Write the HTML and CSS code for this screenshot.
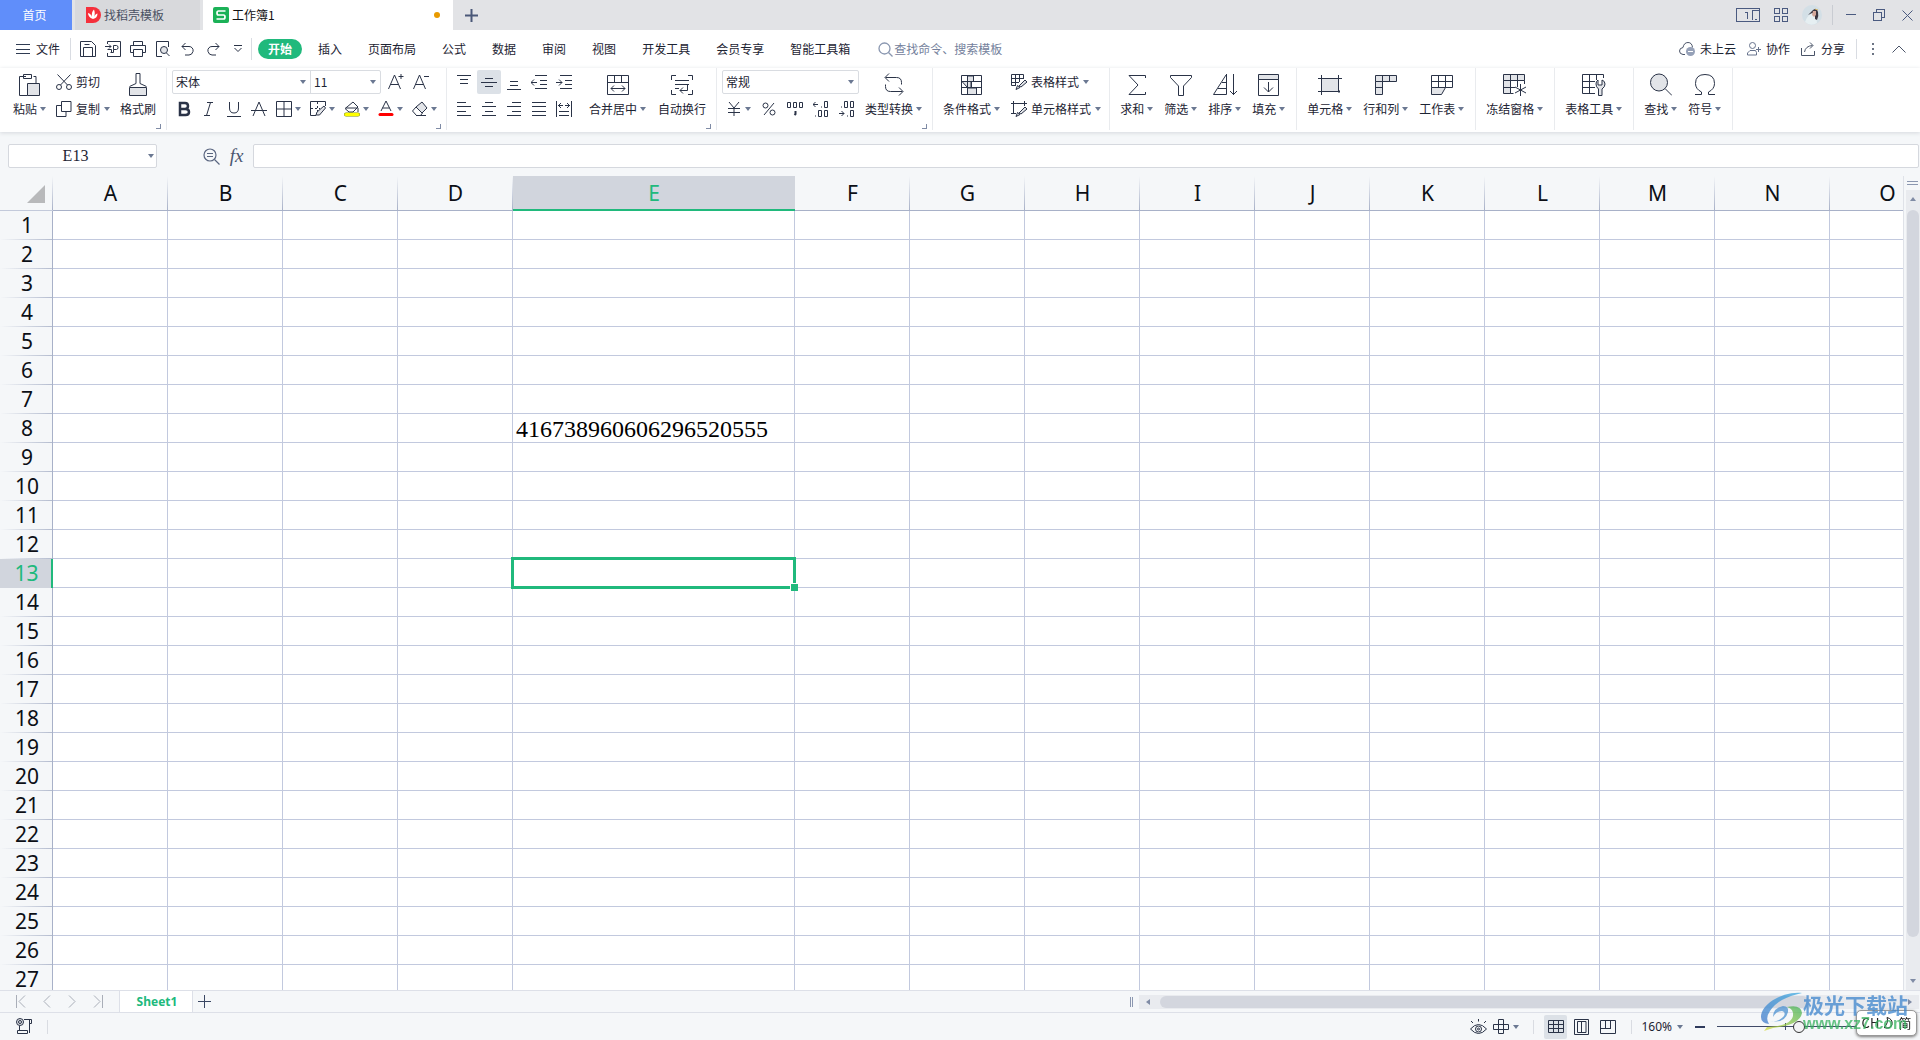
FILE: index.html
```html
<!DOCTYPE html>
<html lang="zh-CN">
<head>
<meta charset="utf-8">
<title>工作簿1</title>
<link rel="stylesheet" href="styles.css">
</head>
<body>
<header class="titlebar">
  <button class="tab tab-home">首页</button>
  <button class="tab tab-doc">
    <svg width="16" height="16" viewBox="0 0 16 16"><path d="M1 0h7a8 8 0 0 1 0 16H1z" fill="#f5303c"/><path d="M8 12C4.500 11 3 8.500 3 6c2 .5 3.500 2 4 4C6.500 7 7 4 9 2.500c1 2.500 1 5 0 7.500 .5-1.500 1.500-3 3.500-3.500C12.500 9.500 11 11.500 8 12z" fill="#fff"/></svg>
    <span>找稻壳模板</span>
  </button>
  <button class="tab tab-active">
    <svg width="16" height="16" viewBox="0 0 16 16"><rect width="16" height="16" rx="2" fill="#1bb157"/><path d="M12.500 4H5.500Q4 4 4 6t1.500 2h5Q12 8 12 10t-1.500 2H3.500" fill="none" stroke="#fff" stroke-width="1.700"/></svg>
    <span>工作簿1</span>
    <i class="unsaved"></i>
  </button>
  <button class="icon-btn tab-new" aria-label="新建"><svg width="13" height="13"><path d="M6.500 0v13M0 6.500h13" stroke="#4a5878" stroke-width="2"/></svg></button>
  <div class="window-tools">
    <button class="icon-btn app" aria-label="窗口"><svg width="24" height="16" fill="none" stroke="#4a5a80" shape-rendering="crispEdges"><path d="M.5 1.500h23v13H.5z"/><path d="M23 3.500h-6.500v9.500M19 12.500h2"/><path d="M9 5.500h2v6"/></svg></button>
    <button class="icon-btn app" aria-label="应用"><svg width="14" height="14" fill="none" stroke="#4a5a80" shape-rendering="crispEdges"><path d="M.5.500h5v5h-5zM8.500.500h5v5h-5zM.5 8.500h5v5h-5zM8.500 8.500h5v5h-5z"/></svg></button>
    <button class="icon-btn" aria-label="账户"><svg width="20" height="20" viewBox="0 0 20 20"><circle cx="10" cy="10" r="10" fill="#d3dfe6"/><path d="M3 17q2-6 6-8l5 1 1 8q-6 4-12-1z" fill="#e6eff2"/><path d="M11 5q4-3 5 2 1 4-1 8l-2-1 0-5-3-1-4 2z" fill="#3b3640"/><path d="M11 6h3v4l-2 2-2-2z" fill="#d4a79a"/><path d="M13 4l3 1" stroke="#d6b86a"/></svg></button>
    <i class="bar-sep"></i>
    <button class="icon-btn win" aria-label="最小化"><svg width="10" height="10"><path d="M0 4.500h10" stroke="#4a5a80" stroke-width="1"/></svg></button>
    <button class="icon-btn win" aria-label="还原"><svg width="12" height="12" fill="none" stroke="#4a5a80" shape-rendering="crispEdges"><path d="M.5 3.500h8v8h-8zM3.500 3.500v-3h8v8h-3"/></svg></button>
    <button class="icon-btn win" aria-label="关闭"><svg width="11" height="11"><path d="M.5.500l10 10M10.500.500l-10 10" stroke="#4a5a80"/></svg></button>
  </div>
</header>

<nav class="menubar">
  <button class="file-btn"><svg width="14" height="10" stroke="#2f3b52" shape-rendering="crispEdges"><path d="M0 .5h14M0 5.500h14M0 9.500h14"/></svg><span>文件</span></button>
  <i class="bar-sep"></i>
  <div class="quick">
    <button class="icon-btn" aria-label="保存"><svg class="ic" width="16" height="16"><path d="M.5.500h11l4 4v11H.5zM3.500 15V6.500h9V15M4.500 3.500h5"/></svg></button>
    <button class="icon-btn" aria-label="输出为PDF"><svg class="ic" width="16" height="16"><path d="M2.500 3V.5h13v15h-13V12M0 5.500h6M4 3.500l2 2-2 2M6.500 12V8.500h-4M8.500 4.500h3q1.500 0 1.500 2t-1.500 2H8.500zM8.500 8.500V11.500h-3"/></svg></button>
    <button class="icon-btn" aria-label="打印"><svg class="ic" width="16" height="16"><path d="M3.500 4V.5h9V4M3.500 11.500h-3v-7h15v7h-3M3.500 8.500h9v7h-9z"/></svg></button>
    <button class="icon-btn" aria-label="打印预览"><svg class="ic" width="16" height="16"><path d="M7 15.500H1.500V.5h12V6"/><circle cx="9" cy="9" r="3.500" class="shade"/><path d="M11.500 12l3 3"/></svg></button>
    <button class="icon-btn" aria-label="撤销"><svg class="ic" width="16" height="16"><path d="M5.500 2L2 5.500 5.500 9M2 5.500h7a4 4 0 0 1 4 5q-1 3.500-4 3.500H5"/></svg></button>
    <button class="icon-btn" aria-label="恢复"><svg class="ic" width="16" height="16"><path d="M10.500 2L14 5.500 10.500 9M14 5.500H7a4 4 0 0 0-4 5q1 3.500 4 3.500h4"/></svg></button>
    <button class="icon-btn more" aria-label="更多"><svg class="ic" width="8" height="8"><path d="M0 .5h8M.5 3l3.500 3.500L7.500 3"/></svg></button>
  </div>
  <i class="bar-sep"></i>
  <div class="tabs">
    <button class="menu on">开始</button><button class="menu">插入</button><button class="menu">页面布局</button><button class="menu">公式</button><button class="menu">数据</button><button class="menu">审阅</button><button class="menu">视图</button><button class="menu">开发工具</button><button class="menu">会员专享</button><button class="menu">智能工具箱</button>
  </div>
  <label class="search"><svg width="15" height="15" fill="none" stroke="#8a97b0" stroke-width="1.300"><circle cx="6.500" cy="6.500" r="5.500"/><path d="M10.500 10.500l4 4"/></svg><input type="text" placeholder="查找命令、搜索模板" aria-label="查找命令、搜索模板"></label>
  <div class="account">
    <button class="acc"><svg width="16" height="14" fill="none" stroke="#4a5468"><path d="M6 12.500H4Q.5 12 .5 9T4 5.500Q5 .5 9 .5t4.500 5"/><circle cx="11.500" cy="9.500" r="4.500" fill="#96a1b8" stroke="none"/><path d="M9 9.500h5" stroke="#fff"/></svg><span>未上云</span></button>
    <button class="acc"><svg width="14" height="14" fill="none" stroke="#66728c"><circle cx="5.500" cy="3.500" r="3"/><path d="M3 8.500h5.500l1 2v2.500H.5v-2zM9 7.500h5M11.500 5v5"/></svg><span>协作</span></button>
    <button class="acc"><svg width="15" height="14" fill="none" stroke="#4a5468"><path d="M.5 6v7.500h13V9M3.500 10q1-6 8-6.500M9 .5l3 3-3 3"/></svg><span>分享</span></button>
    <i class="bar-sep"></i>
    <button class="icon-btn" aria-label="更多选项"><svg width="2" height="12" fill="#6c7484"><path d="M0 0h2v2H0zM0 5h2v2H0zM0 10h2v2H0z"/></svg></button>
    <button class="icon-btn" aria-label="收起功能区"><svg width="14" height="8" fill="none" stroke="#4a5468"><path d="M.5 7.500L7 1l6.500 6.500"/></svg></button>
  </div>
</nav>

<section class="ribbon">
  <div class="group first">
    <button class="big"><svg class="ic" width="22" height="24"><path d="M7 3.500H.5v19h8M14.500 3.500H17V10M4.500 1.500h8v4h-8z"/><path class="shade" d="M8.500 10.500h12v12h-12z"/></svg><span>粘贴<i class="caret"></i></span></button>
    <div class="rows">
      <div class="row"><button class="small"><svg class="ic" width="16" height="16"><circle cx="3" cy="13" r="2.500"/><circle cx="13" cy="13" r="2.500"/><path d="M1.500.500l10 10.500M14.500.500l-10 10.500"/></svg><span>剪切</span></button></div>
      <div class="row"><button class="small"><svg class="ic" width="16" height="16"><path d="M5.500.500h9.500v10H5.500zM5 4.500H.5v11h9.500V11"/></svg><span>复制</span><i class="caret"></i></button></div>
    </div>
    <button class="big"><svg class="ic" width="18" height="24"><path d="M.5 13.500l6.500-3V.5h4V10.500l6.500 3"/><path class="shade" d="M.5 14.500h17v8H.5z"/></svg><span>格式刷</span></button>
    <button class="launcher" aria-label="剪贴板设置"></button>
  </div>

  <div class="group font">
    <div class="rows">
      <div class="row">
        <div class="combos">
          <div class="combo font-name"><select aria-label="字体"><option>宋体</option></select><i class="caret"></i></div>
          <div class="combo font-size"><select aria-label="字号"><option>11</option></select><i class="caret"></i></div>
        </div>
        <button class="tool grow" aria-label="增大字号"><svg class="ic" width="16" height="16"><path d="M.5 15L6.500 1l6 14M2.500 10.500h8M13 0v5M10.500 2.500h5"/></svg></button>
        <button class="tool" aria-label="减小字号"><svg class="ic" width="16" height="16"><path d="M.5 15L6.500 1l6 14M2.500 10.500h8M11 2.500h5"/></svg></button>
      </div>
      <div class="row">
        <button class="tool" aria-label="加粗"><svg class="ic" width="16" height="16"><path stroke-width="2.500" d="M4 2h5q3 0 3 3t-3 3H4zM4 8h5.500q3.500 0 3.500 3t-3.500 3H4z"/></svg></button>
        <button class="tool" aria-label="倾斜"><svg class="ic" width="16" height="16"><path d="M6 1.500h6M3 14.500h6M9.500 1.500l-4 13"/></svg></button>
        <button class="tool" aria-label="下划线"><svg class="ic" width="16" height="16"><path d="M3.500 1v6q0 5 4.500 5t4.500-5V1M1 15.500h14"/></svg></button>
        <button class="tool" aria-label="删除线"><svg class="ic" width="16" height="16"><path d="M2 15L8 1l6 14M0 9.500h16"/></svg></button>
        <button class="split" aria-label="边框"><svg class="ic" width="16" height="16"><path d="M.5.500h15v15H.5zM8 0v16M0 8h16"/></svg><i class="caret"></i></button>
        <button class="split" aria-label="绘图边框"><svg class="ic" width="16" height="16"><path d="M15.500 5V.5H.5v14H6"/><path stroke-dasharray="2 2" d="M7.500 1v9M1 7.500h9"/><path class="shade" d="M6 14l1-3 7-6 1.500 2-6 7z"/></svg><i class="caret"></i></button>
        <button class="split" aria-label="填充颜色"><svg class="ic" width="16" height="16"><path d="M3 6l6-5 5 5-5 5H5L1 7.500zM2 7h11M14 7v4"/><path d="M2 13.500h12" stroke="#7c8c00" stroke-width="4" stroke-linecap="round"/><path d="M2 13.500h12" stroke="#ff0" stroke-width="3" stroke-linecap="round"/></svg><i class="caret"></i></button>
        <button class="split" aria-label="字体颜色"><svg class="ic" width="16" height="16"><path d="M3 10L8 0l5 10M4.500 7h7"/><path d="M2 13.500h12" stroke="red" stroke-width="3" stroke-linecap="round"/></svg><i class="caret"></i></button>
        <button class="split" aria-label="清除"><svg class="ic" width="16" height="16"><path class="shade" d="M4 6l6-5 5 6-5 5z"/><path d="M4 6l-3.500 4 4 4.500h4l2-2.500M4 14.500h10"/></svg><i class="caret"></i></button>
      </div>
    </div>
    <button class="launcher" aria-label="字体设置"></button>
  </div>

  <div class="group tight">
    <div class="rows">
      <div class="row">
        <button class="tool" aria-label="顶端对齐"><svg class="ic" width="16" height="16"><path d="M1 1.500h14M4 5.500h8M4 9.500h8"/></svg></button>
        <button class="tool on" aria-label="垂直居中"><svg class="ic" width="16" height="16"><path d="M4 4.500h8M0 8.500h16M4 12.500h8"/></svg></button>
        <button class="tool" aria-label="底端对齐"><svg class="ic" width="16" height="16"><path d="M4 7.500h8M4 11.500h8M1 15.500h14"/></svg></button>
        <button class="tool" aria-label="减少缩进"><svg class="ic" width="16" height="16"><path d="M4 1.500h12M9 6.500h7M9 10.500h7M4 14.500h12M0 8.500h6M3 5.500l-3 3 3 3"/></svg></button>
        <button class="tool" aria-label="增加缩进"><svg class="ic" width="16" height="16"><path d="M4 1.500h12M9 6.500h7M9 10.500h7M4 14.500h12M0 8.500h6M3 5.500l3 3-3 3"/></svg></button>
      </div>
      <div class="row">
        <button class="tool" aria-label="左对齐"><svg class="ic" width="16" height="16"><path d="M1 1.500h9M1 5.500h14M1 10.500h9M1 14.500h14"/></svg></button>
        <button class="tool" aria-label="水平居中"><svg class="ic" width="16" height="16"><path d="M4 1.500h8M1 5.500h14M4 10.500h8M1 14.500h14"/></svg></button>
        <button class="tool" aria-label="右对齐"><svg class="ic" width="16" height="16"><path d="M6 1.500h9M1 5.500h14M6 10.500h9M1 14.500h14"/></svg></button>
        <button class="tool" aria-label="两端对齐"><svg class="ic" width="16" height="16"><path d="M1 1.500h14M1 5.500h14M1 10.500h14M1 14.500h14"/></svg></button>
        <button class="tool" aria-label="分散对齐"><svg class="ic" width="16" height="16"><path d="M.5 0v16M15.500 0v16M2 4.500h5M9 4.500h5M5 2L2.500 4.500 5 7M11 2l2.500 2.500L11 7M3 10.500h10M3 14.500h10"/></svg></button>
      </div>
    </div>
    <button class="big wide"><svg class="ic" width="22" height="24"><path d="M.5 2.500h21v19H.5zM0 9.500h22M7.500 3v6M14.500 3v6M4 15.500h14M7 12.500l-3 3 3 3M15 12.500l3 3-3 3"/></svg><span>合并居中<i class="caret"></i></span></button>
    <button class="big"><svg class="ic" width="22" height="24"><path d="M5 2.500H.5V7M17 2.500h4.500V7M5 21.500H.5V17M17 21.500h4.500V17M4 7.500h14M4 11.500h14M4 15.500h4M16.500 12v5.500H9M12 14.500l-3 3 3 3"/></svg><span>自动换行</span></button>
    <button class="launcher" aria-label="对齐设置"></button>
  </div>

  <div class="group tight">
    <div class="rows">
      <div class="row"><div class="combos"><div class="combo format"><select aria-label="数字格式"><option>常规</option></select><i class="caret"></i></div></div></div>
      <div class="row spread">
        <button class="split" aria-label="货币"><svg class="ic" width="16" height="16"><path d="M3 1l5 6 5-6M8 7v8M2 7.500h12M2 11.500h12"/></svg><i class="caret"></i></button>
        <button class="tool" aria-label="百分比"><svg class="ic" width="16" height="16"><circle cx="4.500" cy="4.500" r="2.500"/><circle cx="11.500" cy="11.500" r="2.500"/><path d="M13 2L3 14"/></svg></button>
        <button class="tool" aria-label="千位分隔"><svg class="ic" width="16" height="16"><path d="M.5 1.500h3v5h-3zM6.500 1.500h3v5h-3zM12.500 1.500h3v5h-3z"/><path d="M8.500 10v3l-1 1" stroke-width="2"/></svg></button>
        <button class="tool" aria-label="增加小数位"><svg class="ic" width="16" height="16"><path d="M0 3.500h5M2.500 1L0 3.500 2.500 6M8 6h1M11.500.500h3v6h-3zM2 15h1M5.500 9.500h3v6h-3zM11.500 9.500h3v6h-3z"/></svg></button>
        <button class="tool" aria-label="减少小数位"><svg class="ic" width="16" height="16"><path d="M2 6h1M5.500.500h3v6h-3zM11.500.500h3v6h-3zM0 12.500h5M2.500 10L5 12.500 2.500 15M8 15h1M11.500 9.500h3v6h-3z"/></svg></button>
      </div>
    </div>
    <button class="big near"><svg class="ic" width="20" height="24"><path d="M5 .5L1 4.500l4 4M1.500 4.500h11q5 0 5 5v2M15 14.500l4 4-4 4M18.500 18.500h-12q-5 0-5-5v-2"/></svg><span>类型转换<i class="caret"></i></span></button>
    <button class="launcher" aria-label="数字设置"></button>
  </div>

  <div class="group snug">
    <button class="big"><svg class="ic" width="22" height="24"><path class="shade" d="M6.500 3v5.500h6V3zM6.500 15v6.500h9V15zM1 8.500h9v6H6.500z"/><path d="M.5 2.500h20v19H.5zM0 8.500h21M0 14.500h21M6.500 3v19M12.500 3v6M10.500 9v6M15.500 15v7"/></svg><span>条件格式<i class="caret"></i></span></button>
    <div class="rows">
      <div class="row"><button class="small"><svg class="ic" width="16" height="16"><path d="M12.500 4V.5H.5v11H5M0 4.500h13M0 8.500h8M4.500 0v11M8.500 0v8"/><path class="shade" d="M5 15.500l1.500-4 2.500 2zM8 12l6-6 2 2-6 5z"/></svg><span>表格样式</span><i class="caret"></i></button></div>
      <div class="row"><button class="small"><svg class="ic" width="16" height="16"><path d="M0 2.500h16M2.500 0v13M13.500 0v5M0 12.500h5"/><path class="shade" d="M5 15.500l1.500-4 2.500 2zM8 12l6-6 2 2-6 5z"/></svg><span>单元格样式</span><i class="caret"></i></button></div>
    </div>
  </div>

  <div class="group">
    <button class="big"><svg class="ic" width="18" height="24"><path d="M17.500 5V2.500H1l9 9.500-9 9.500h16.500V19"/></svg><span>求和<i class="caret"></i></span></button>
    <button class="big"><svg class="ic" width="22" height="24"><path d="M.5 2.500h21v2l-8 8.500v9.500h-5V13l-8-8.500z"/></svg><span>筛选<i class="caret"></i></span></button>
    <button class="big"><svg class="ic" width="24" height="24"><path d="M13.500 1v20.500H.5L13 2M9 9.500h4.500M5 15.500h8.500M20.500 1v21M17 18l3.500 3.500L24 18"/></svg><span>排序<i class="caret"></i></span></button>
    <button class="big"><svg class="ic" width="22" height="24"><path class="shade" d="M.5 1.500h20v5H.5z"/><path d="M.5 6.500h20v16H.5zM10.500 9v10M6 14.500l4.500 4.500 4.500-4.500"/></svg><span>填充<i class="caret"></i></span></button>
  </div>

  <div class="group">
    <button class="big"><svg class="ic" width="24" height="24"><path class="shade" d="M3.500 5.500h17v13h-17z"/><path d="M0 5.500h24M3.500 2v20M20.500 2v14M0 18.500h18"/><path d="M20 18.500h2" stroke-width="2"/></svg><span>单元格<i class="caret"></i></span></button>
    <button class="big"><svg class="ic" width="22" height="24"><path class="shade" d="M.5 2.500h21v6h-21zM.5 8.500h7v13h-7z"/><path d="M.5 14.500h7M7.500 3v6M14.500 3v6"/></svg><span>行和列<i class="caret"></i></span></button>
    <button class="big"><svg class="ic" width="22" height="24"><path d="M.5 2.500h21v12H.5zM0 8.500h22M7.500 3v12M14.500 3v12"/><path class="shade" d="M.5 14.500h14l-4 7H.5z"/></svg><span>工作表<i class="caret"></i></span></button>
  </div>

  <div class="group">
    <button class="big"><svg class="ic" width="24" height="24"><path class="shade" d="M.5 1.500h21v6h-21zM.5 7.500h7v13h-7z"/><path d="M21.500 7.500V11M7.500 20.500h3M.5 14.500H12M7.500 2v6M14.500 2v12M17.500 11v12M12 14l11 6M12 20l11-6"/></svg><span>冻结窗格<i class="caret"></i></span></button>
  </div>
  <div class="group">
    <button class="big"><svg class="ic" width="24" height="24"><path d="M21.500 5V1.500H.5v19H13M0 8.500h13M0 14.500h13M7.500 2v19M14.500 2v5"/><path class="shade" d="M16.500 22.500V16Q14 14 14 11t2-4v5h4V7q3 1 3 4t-3 5v6.500z"/></svg><span>表格工具<i class="caret"></i></span></button>
  </div>
  <div class="group">
    <button class="big"><svg class="ic" width="22" height="24"><circle class="shade" cx="9" cy="9.500" r="8.500"/><path d="M15 15.500l7 7"/></svg><span>查找<i class="caret"></i></span></button>
    <button class="big"><svg class="ic" width="20" height="24"><path d="M0 21.500h6.500V19Q.5 16 .5 10.500.5 1.500 10 1.500t9.500 9q0 5.500-6 8.500v2.500H20"/></svg><span>符号<i class="caret"></i></span></button>
  </div>
</section>

<section class="formula-bar">
  <div class="namebox"><input type="text" value="E13" aria-label="名称框"><i class="caret"></i></div>
  <button class="icon-btn" aria-label="查找公式"><svg width="17" height="17" fill="none" stroke="#5a6680" stroke-width="1.200"><circle cx="7" cy="7" r="6"/><path d="M11.500 11.500l5 5M4 5.500h6M4 8.500h6"/></svg></button>
  <button class="fx" aria-label="插入函数">fx</button>
  <input class="formula" type="text" aria-label="编辑栏">
</section>

<main class="sheet">
  <div class="grid-view"><table class="grid" id="grid"></table></div>
  <div class="vscroll">
    <i class="v-split"></i>
    <div class="v-track"><i class="arrow up"></i><i class="v-thumb"></i><i class="arrow down"></i></div>
  </div>
</main>

<section class="sheetbar">
  <div class="sheet-nav">
    <button class="icon-btn" aria-label="第一张"><svg width="10" height="13"><path d="M.5 0v13M9 .5l-6 6 6 6"/></svg></button>
    <button class="icon-btn" aria-label="上一张"><svg width="8" height="13"><path d="M7 .5l-6 6 6 6"/></svg></button>
    <button class="icon-btn" aria-label="下一张"><svg width="8" height="13"><path d="M1 .5l6 6-6 6"/></svg></button>
    <button class="icon-btn" aria-label="最后一张"><svg width="10" height="13"><path d="M9.500 0v13M1 .5l6 6-6 6"/></svg></button>
  </div>
  <button class="sheet-tab">Sheet1</button>
  <button class="icon-btn add-sheet" aria-label="新建工作表"><svg width="13" height="13"><path d="M6.500 0v13M0 6.500h13" stroke="#3a4763" stroke-width="1"/></svg></button>
  <div class="hscroll"><i class="grip"></i><div class="h-track"><i class="arrow left"></i><i class="h-thumb"></i><i class="arrow right"></i></div></div>
</section>

<footer class="status">
  <button class="icon-btn" aria-label="宏录制"><svg class="ic" width="17" height="17"><circle class="shade" cx="4" cy="4" r="3.500"/><circle cx="4" cy="4" r="1.500"/><path d="M8 1.500h7.500v4h-2M13.500 2v13M1.500 12.500h10v3h-10zM3.500 8v4"/></svg></button>
  <i class="bar-sep"></i>
  <div class="view-tools">
    <button class="icon-btn" aria-label="护眼模式"><svg class="ic" width="17" height="16"><path d="M.5 10q8-9 16 0-8 9-16 0zM8.500 0v2.500M1 2l2 2M16 2l-2 2"/><circle cx="8.500" cy="10" r="3"/><circle cx="8.500" cy="10" r="1"/></svg></button>
    <button class="icon-btn reading" aria-label="阅读模式"><svg class="ic" width="16" height="15"><path d="M5.500.500h5v14h-5zM.5 5.500h15v5H.5z"/></svg><i class="caret"></i></button>
    <i class="bar-sep"></i>
    <button class="icon-btn view on" aria-label="普通视图"><svg class="ic" width="16" height="14"><path d="M.5.500h15v12H.5zM0 4.500h16M0 8.500h16M5.500 0v13M10.500 0v13"/></svg></button>
    <button class="icon-btn view" aria-label="页面布局"><svg class="ic" width="16" height="16"><path d="M.5.500h14v15H.5zM3.500 2.500h8.500v11H3.500zM7.500 2.500v11"/></svg></button>
    <button class="icon-btn view" aria-label="分页预览"><svg class="ic" width="16" height="14"><path d="M.5.500h15v13H.5zM5.500 0v8M10.500 0v8M0 8.500h11"/></svg></button>
    <i class="bar-sep near-sep"></i>
    <button class="zoom-val">160%<i class="caret"></i></button>
    <button class="icon-btn minus" aria-label="缩小"><svg width="10" height="2"><path d="M0 1h10" stroke="#2f3b5c" stroke-width="2"/></svg></button>
    <input class="zoom-range" type="range" min="0" max="100" value="47" aria-label="显示比例">
  </div>
</footer>

<div class="ime"><span>CH</span><svg width="9" height="12" fill="none" stroke="#222"><path d="M3 .5q2 5-3 10 6 2 8-3Q9 2 3 .5z"/></svg><span>简</span></div>
<div class="watermark">
  <svg width="42" height="40" viewBox="0 0 42 40">
    <defs><linearGradient id="wb" x1="0" y1="1" x2="1" y2="0"><stop offset="0" stop-color="#3f78c8"/><stop offset="1" stop-color="#3aa9e0"/></linearGradient><linearGradient id="wg" x1="0" y1="1" x2="1" y2="0"><stop offset="0" stop-color="#d8dc3c"/><stop offset="1" stop-color="#3cae58"/></linearGradient></defs>
    <path d="M41 1C22-1 0 12 0 25q0 6 8 7-4-6 1-13Q17 6 41 1z" fill="url(#wb)"/>
    <path d="M9 29q8 2 14-5 2-4-2-5-6 0-9 6 0-9 10-11 6 0 5 6-3 12-18 9z" fill="#4a90d0"/>
    <path d="M26 15q14-3 15 6Q39 33 12 36l-9 3 3-4q24-1 26-11 1-7-6-9z" fill="url(#wg)"/>
  </svg>
  <div><b>极光下载站</b><span>www.xz7.com</span></div>
</div>
<script src="grid.js"></script>
</body>
</html>
```
FILE: grid.js
```js
const columns = 'ABCDEFGHIJKLMNO'.split('');
const rowCount = 27;
const cells = { E8: '416738960606296520555' };
const active = { col: 'E', row: 13 };

const grid = document.getElementById('grid');
let html = '<colgroup><col class="c-head">';
columns.forEach(c => { html += `<col class="${c === 'E' ? 'c-wide' : 'c-std'}">`; });
html += '</colgroup><thead><tr><td class="corner"></td>';
columns.forEach(c => { html += `<th scope="col"${c === active.col ? ' class="on"' : ''}>${c}</th>`; });
html += '</tr></thead><tbody>';
for (let r = 1; r <= rowCount; r++) {
  html += `<tr><th scope="row"${r === active.row ? ' class="on"' : ''}>${r}</th>`;
  columns.forEach(c => {
    const selected = c === active.col && r === active.row;
    html += selected ? '<td class="selected"><i class="cursor"></i></td>' : `<td>${cells[c + r] || ''}</td>`;
  });
  html += '</tr>';
}
grid.innerHTML = html + '</tbody>';
```
FILE: styles.css
```css
* { box-sizing: border-box; }
body {
  margin: 0;
  height: 100vh;
  display: flex;
  flex-direction: column;
  overflow: hidden;
  background: #f5f7f9;
  color: #1d2433;
  font: 12px/18px "Noto Sans CJK SC", sans-serif;
}
button, input, select {
  font: inherit;
  color: inherit;
  border: 0;
  padding: 0;
  margin: 0;
  background: none;
  border-radius: 0;
  outline: 0;
}
button { display: flex; align-items: center; justify-content: center; flex: none; white-space: nowrap; }
svg { display: block; flex: none; }
.ic { fill: none; stroke: #2a3347; }
.ic .shade { fill: #e2e4e8; }
.caret {
  flex: none;
  display: inline-block;
  border: 3px solid transparent;
  border-top: 4px solid #6b7892;
  border-bottom: 0;
}
.bar-sep { width: 1px; flex: none; background: #d9dce2; }

/* title bar */
.titlebar { display: flex; height: 30px; background: #e2e3e6; flex: none; }
.tab { gap: 3px; height: 30px; }
.tab-home { width: 72px; background: #608efa; color: #fff; margin-right: 3px; padding-right: 3px; }
.tab-doc { width: 125px; background: #d8d9dc; color: #4a5163; justify-content: flex-start; padding-left: 10px; margin-right: 3px; }
.tab-active { width: 250px; background: #fff; color: #111; justify-content: flex-start; padding: 0 13px 0 10px; }
.unsaved { width: 6px; height: 6px; border-radius: 50%; background: #e89a00; margin-left: auto; }
.tab-new { width: 36px; }
.window-tools { margin-left: auto; display: flex; align-items: center; gap: 12px; padding-right: 5px; }
.window-tools .bar-sep { height: 20px; background: #c9ccd2; margin: 0 -2px; }
.app { margin-right: 2px; }
.win { width: 16px; }

/* menu bar */
.menubar { display: flex; align-items: center; height: 38px; background: #fff; flex: none; }
.menubar .bar-sep { height: 22px; }
.file-btn { padding: 0 10px 0 16px; gap: 6px; }
.quick { display: flex; align-items: center; gap: 9px; padding: 0 9px; }
.quick .more { margin-left: 4px; }
.tabs { display: flex; gap: 6px; padding-left: 6px; }
.menu { height: 20px; padding: 0 10px; border-radius: 10px; }
.menu.on { background: #20b97c; color: #fff; font-weight: 700; }
.search { display: flex; align-items: center; gap: 1px; margin-left: 18px; }
.search input { width: 140px; }
.search input::placeholder { color: #74819c; opacity: 1; }
.account { margin-left: auto; display: flex; align-items: center; gap: 11px; padding-right: 14px; }
.acc { gap: 5px; }
.account .bar-sep { height: 20px; margin-right: 4px; }
.account .icon-btn { margin-right: 7px; }
.account .icon-btn:last-child { margin-right: 0; }

/* ribbon */
.ribbon { display: flex; height: 64px; background: #fff; flex: none; box-shadow: 0 1px 4px #d5d8dd; z-index: 1; }
.group { position: relative; display: flex; gap: 11px; height: 62px; padding: 0 11px 0 10px; border-right: 1px solid #e9ebee; flex: none; }
.group.first { gap: 10px; padding: 0 10px 0 13px; }
.group.font { padding: 0 5px; }
.group.tight { padding: 0 10px 0 5px; }
.group.snug { padding-right: 8px; }
.rows { display: flex; flex-direction: column; gap: 3px; padding-top: 2px; }
.row { display: flex; gap: 1px; height: 24px; align-items: center; }
.spread { justify-content: space-between; }
.big { flex-direction: column; justify-content: flex-start; padding-top: 5px; gap: 3px; }
.big span { display: flex; align-items: center; gap: 3px; }
.big.wide { margin: 0 1px 0 2px; }
.big.near { margin-left: -5px; }
.small { gap: 4px; }
.tool { width: 24px; height: 24px; }
.tool.on, .view.on { background: #dce1e7; border-radius: 2px; }
.tool.grow { margin-left: 2px; }
.split { width: 33px; height: 24px; gap: 3px; justify-content: flex-start; padding-left: 4px; }
.launcher { position: absolute; right: 5px; bottom: 1px; width: 5px; height: 5px; border: solid #7f8ba5; border-width: 0 1px 1px 0; }
.combos { display: flex; height: 24px; border: 1px solid #d9dce1; border-radius: 2px; }
.combo { display: grid; grid-template-columns: 1fr 14px; align-items: center; }
.combo + .combo { border-left: 1px solid #d9dce1; }
.combo select { grid-area: 1 / 1 / 2 / 3; height: 22px; padding-left: 3px; appearance: none; }
.combo .caret { grid-area: 1 / 2; pointer-events: none; justify-self: center; }
.font-name { width: 137px; }
.font-size { width: 70px; }
.format { width: 135px; }

/* formula bar */
.formula-bar { display: flex; align-items: center; height: 44px; padding: 4px 1px 0 8px; flex: none; }
.namebox { display: grid; grid-template-columns: 1fr 10px; align-items: center; width: 149px; height: 24px; margin-right: 46px; background: #fff; border: 1px solid #d5d8de; border-radius: 2px; }
.namebox input { grid-area: 1 / 1 / 2 / 3; width: 100%; padding-right: 14px; text-align: center; font: 16px/20px "Liberation Serif", serif; }
.namebox .caret { grid-area: 1 / 2; justify-self: center; }
.fx { width: 33px; font: italic 19px/22px "Liberation Serif", serif; color: #4a5670; }
.formula { flex: 1; min-width: 0; height: 24px; background: #fff; border: 1px solid #d5d8de; border-radius: 2px; }

/* sheet */
.sheet { display: flex; flex: 1; min-height: 0; }
.grid-view { flex: 1; min-width: 0; overflow: hidden; background: #fff; }
.grid { width: 1945px; table-layout: fixed; border-collapse: separate; border-spacing: 0; }
.c-head { width: 53px; }
.c-std { width: 115px; }
.c-wide { width: 282px; }
.grid td, .grid th { height: 29px; padding: 0; }
.grid th { font: 21px/26px "Noto Sans", sans-serif; color: #0c0f16; text-align: center; }
.grid tbody th { padding: 0 0 2px 2px; }
.grid thead th, .grid .corner { height: 35px; border-bottom: 1px solid #a8b1c8; background: linear-gradient(#f5f7f9, #a8b1c8) right / 1px 100% no-repeat #f5f7f9; }
.grid thead .corner { border-bottom-color: #c3cadb; }
.corner::after { content: ""; display: block; width: 18px; height: 18px; margin: 2px 0 0 27px; background: #b8b9bb; clip-path: polygon(100% 0, 100% 100%, 0 100%); }
.grid tbody th { border-right: 1px solid #a8b1c8; background: linear-gradient(90deg, #f5f7f9, #b4bccf) bottom / 100% 1px no-repeat #f5f7f9; }
.grid tbody td { border: solid #c2c9de; border-width: 0 1px 1px 0; padding: 2px 0 0 3px; font: 24px/26px "Liberation Serif", serif; color: #000; text-align: left; }
.grid thead th.on { background: #d1d5dd; color: #20b97c; border-bottom: 2px solid #20b97c; }
.grid tbody th.on { background: #d1d5dd; color: #20b97c; border-right: 2px solid #20b97c; }
.grid td.selected { position: relative; }
.cursor { position: absolute; inset: -2px; border: 3px solid #20b97c; }
.cursor::after { content: ""; position: absolute; right: -5px; bottom: -5px; width: 7px; height: 7px; background: #20b97c; border: solid #fff; border-width: 1px 0 0 1px; }
.vscroll { width: 17px; flex: none; display: flex; flex-direction: column; border-left: 1px solid #dfe2e8; }
.v-split { height: 4px; width: 11px; margin: 5px 0 5px 3px; border: solid #8b97b0; border-width: 1px 0; }
.v-track { flex: 1; display: flex; flex-direction: column; align-items: center; padding: 7px 0; margin-left: 2px; background: #e9ebef; }
.v-thumb { flex: 1; width: 12px; margin: 9px 0 42px; border-radius: 6px; background: #d3d6de; }
.arrow { flex: none; border: 3px solid transparent; }
.arrow.up { border-bottom: 4px solid #7f8ba5; border-top: 0; }
.arrow.down { border-top: 4px solid #7f8ba5; border-bottom: 0; }
.arrow.left { border-right: 4px solid #7f8ba5; border-left: 0; }
.arrow.right { border-left: 4px solid #7f8ba5; border-right: 0; }

/* sheet tabs */
.sheetbar { display: flex; align-items: center; height: 23px; border: solid #dde0e8; border-width: 1px 0; flex: none; }
.sheet-nav { display: flex; align-items: center; gap: 17px; padding-left: 16px; width: 119px; }
.sheet-nav svg { fill: none; stroke: #a9aeb8; }
.sheet-tab { width: 74px; height: 21px; background: #fff; border: solid #dde0e8; border-width: 0 1px; padding-left: 2px; color: #20b97c; font: bold 12px/20px "Noto Sans", sans-serif; }
.add-sheet { margin-left: 5px; }
.hscroll { display: flex; align-items: center; width: calc(41% + 3px); margin-left: auto; gap: 6px; padding-right: 1px; }
.grip { width: 3px; height: 10px; border: solid #8b97b0; border-width: 0 1px; }
.h-track { flex: 1; display: flex; align-items: center; height: 14px; padding: 0 7px; background: #e9ebef; }
.h-thumb { flex: 1; height: 12px; margin: 0 99px 0 10px; border-radius: 6px; background: #d3d6de; }

/* status bar */
.status { display: flex; align-items: center; height: 27px; padding-left: 16px; flex: none; }
.status .bar-sep { height: 14px; margin-left: 14px; }
.view-tools { margin-left: auto; display: flex; align-items: center; padding-right: 30px; }
.view-tools .bar-sep { margin: 0 10px; }
.view-tools .near-sep { margin: 0 9px; }
.reading { gap: 4px; margin: 0 4px 0 6px; }
.view { width: 23px; height: 24px; margin-right: 3px; }
.zoom-val { gap: 5px; font: 12px/18px "Noto Sans", sans-serif; }
.minus { margin: 0 12px; }
.zoom-range {
  appearance: none;
  width: 173px;
  height: 14px;
  background:
    linear-gradient(#3f4a68, #3f4a68) 68px center / 1px 7px no-repeat,
    linear-gradient(#3f4a68, #3f4a68) center / 100% 1px no-repeat;
}
.zoom-range::-webkit-slider-thumb { appearance: none; width: 12px; height: 12px; border: 1px solid #333; border-radius: 50%; background: #f2f3f5; }

/* floating layers */
.ime { position: fixed; right: 3px; bottom: 4px; width: 61px; height: 26px; display: flex; align-items: center; justify-content: center; gap: 5px; background: #fff; border: 1px solid #999; border-radius: 5px; box-shadow: 0 1px 3px #777; color: #222; font-size: 13px; }
.watermark { position: fixed; right: 8px; bottom: 7px; display: flex; pointer-events: none; opacity: .75; }
.watermark div { display: flex; flex-direction: column; width: 109px; margin-top: 1px; }
.watermark b { font-size: 21px; line-height: 22px; color: #3d85cc; }
.watermark span { font: bold 16px/18px "Liberation Sans", sans-serif; color: #37b25e; }
```
